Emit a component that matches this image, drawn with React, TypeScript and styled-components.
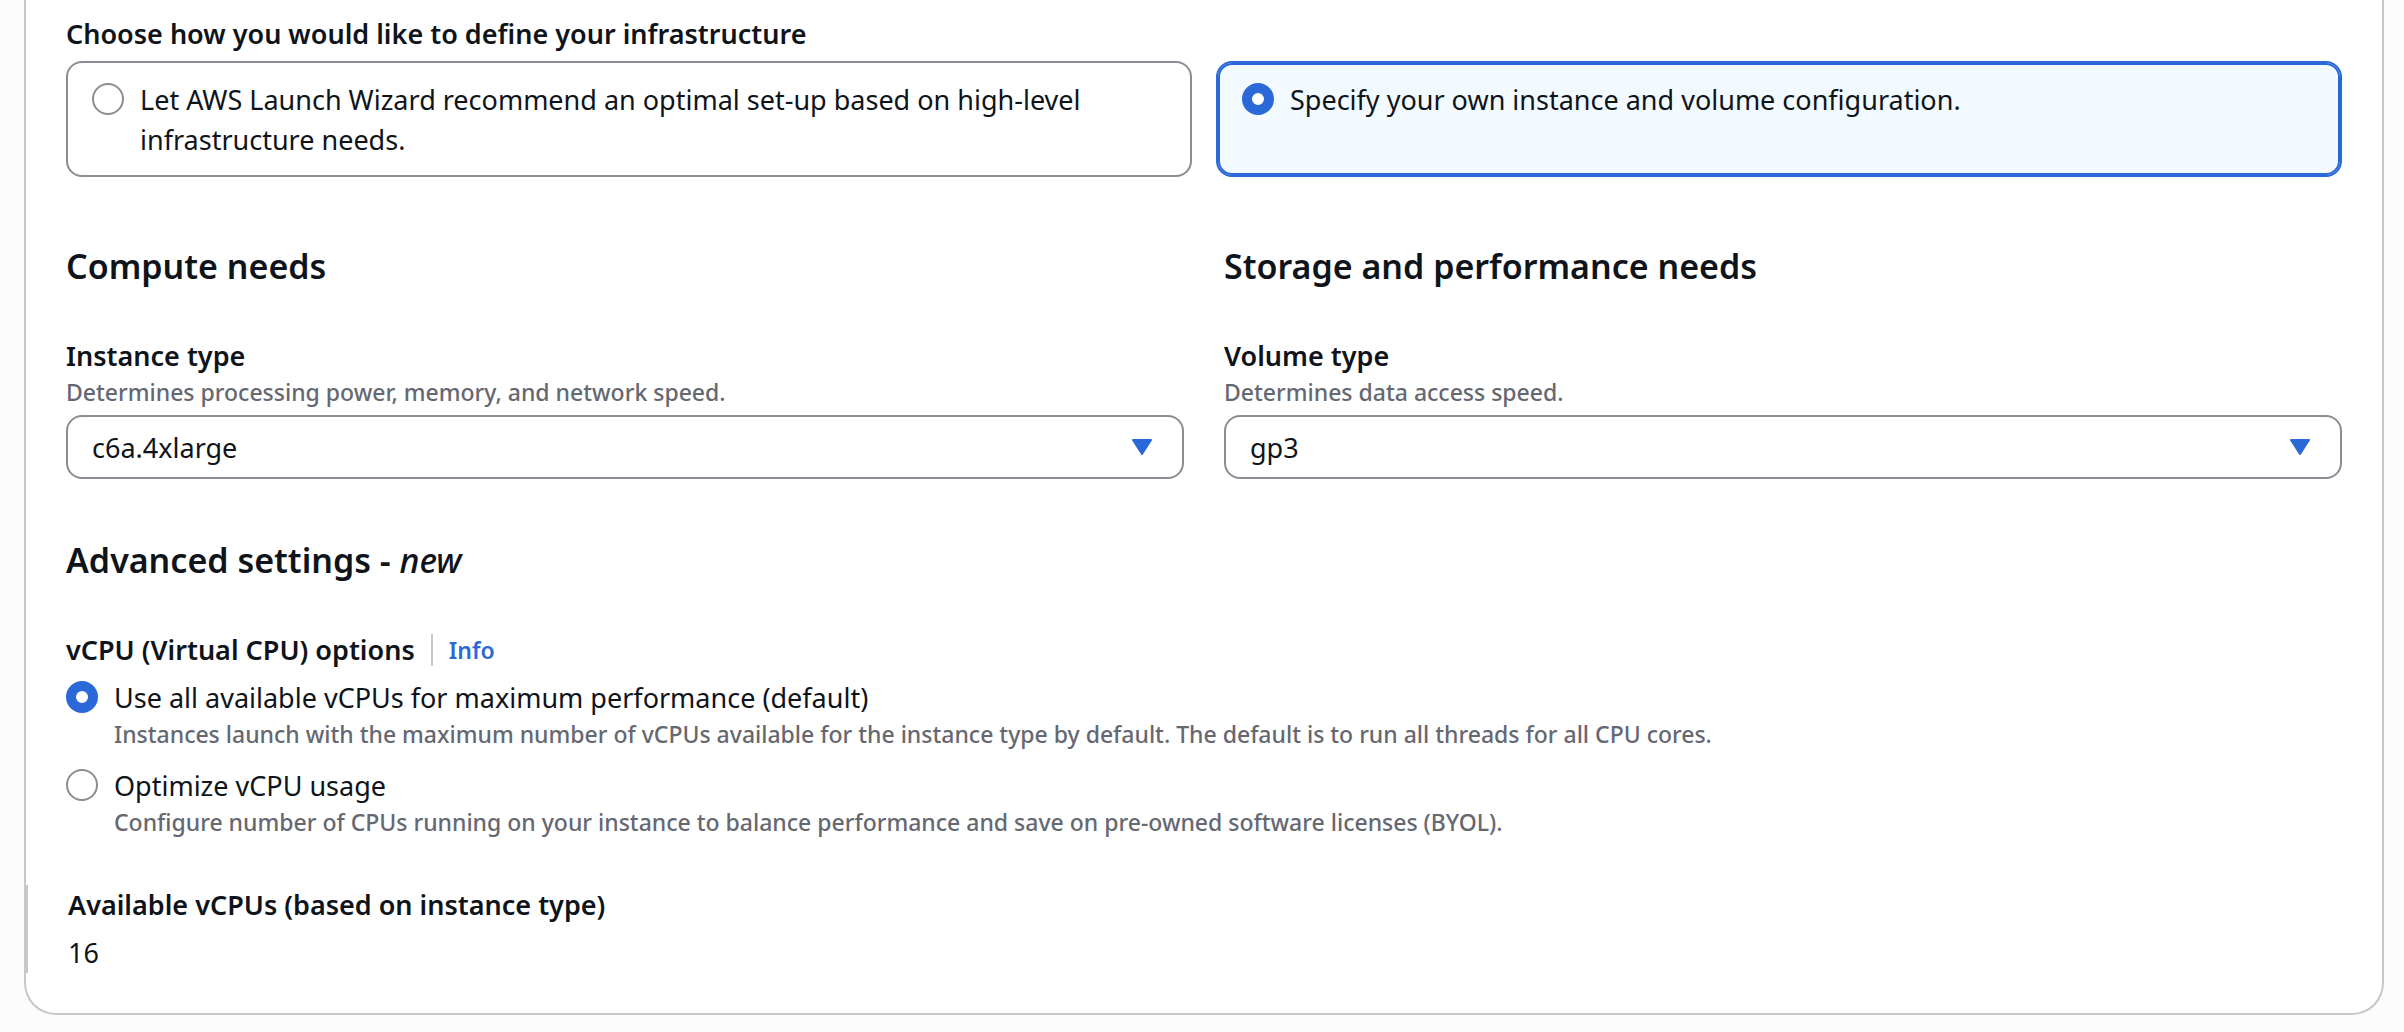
import React, { useId, useState } from 'react';
import styled, { createGlobalStyle, css } from 'styled-components';

const color = {
  page: '#fcfcfd',
  surface: '#ffffff',
  text: '#0f141a',
  muted: '#656871',
  control: '#8c8c94',
  divider: '#c6c6cd',
  accent: '#2b69d9',
  accentSurface: '#f2faff',
};

const GlobalStyle = createGlobalStyle`
  *, *::before, *::after { box-sizing: border-box; }
  body {
    margin: 0;
    background: ${color.page};
    color: ${color.text};
    font-family: "Noto Sans", "Open Sans", sans-serif;
    font-size: 27px;
    font-weight: 400;
    line-height: 40px;
  }
`;

const Page = styled.main`
  padding: 0 20px 16px 24px;
`;

const Card = styled.section`
  padding: 14px 40px 40px;
  background: ${color.surface};
  border: 2px solid ${color.divider};
  border-top: 0;
  border-radius: 0 0 32px 32px;
`;

const Group = styled.fieldset`
  margin: 0;
  padding: 0;
  border: 0;
  min-width: 0;
`;

const labelText = css`
  font-size: 27px;
  font-weight: 600;
  line-height: 40px;
`;

const Legend = styled.legend`
  ${labelText}
  padding: 0;
  margin-bottom: 7px;
`;

const LegendRow = styled.span`
  display: flex;
  align-items: center;
`;

const FieldLabel = styled.label`
  ${labelText}
  display: block;
`;

const Hint = styled.p`
  margin: 0;
  color: ${color.muted};
  font-size: 23px;
  font-weight: 500;
  line-height: 32px;
`;

const TileGrid = styled.div`
  display: grid;
  grid-template-columns: 1fr 1fr;
  gap: 24px;
`;

const Tile = styled.label<{ $selected: boolean }>`
  display: flex;
  gap: 16px;
  padding: 17px 24px 15px;
  border: 2px solid ${(p) => (p.$selected ? color.accent : color.control)};
  border-radius: 16px;
  background: ${(p) => (p.$selected ? color.accentSurface : color.surface)};
  box-shadow: ${(p) => (p.$selected ? `inset 0 0 0 2px ${color.accent}` : 'none')};
  cursor: pointer;
`;

const Radio = styled.input.attrs({ type: 'radio' })`
  appearance: none;
  flex: none;
  width: 32px;
  height: 32px;
  margin: 3px 0 0;
  border: 2px solid ${color.control};
  border-radius: 50%;
  background: ${color.surface};
  cursor: pointer;

  &:checked {
    border: 10px solid ${color.accent};
  }
`;

const Columns = styled.div`
  display: grid;
  grid-template-columns: 1fr 1fr;
  gap: 40px;
  margin-top: 65px;
`;

const Heading = styled.h2`
  margin: 0 0 46px;
  font-size: 34px;
  font-weight: 600;
  line-height: 48px;
`;

const NewTag = styled.em`
  font-weight: 500;
`;

const Advanced = styled.section`
  margin-top: 57px;
`;

const SelectBox = styled.div`
  position: relative;
  margin-top: 7px;
`;

const Select = styled.select`
  appearance: none;
  display: block;
  width: 100%;
  height: 64px;
  padding: 1px 72px 0 24px;
  border: 2px solid ${color.control};
  border-radius: 16px;
  background: ${color.surface};
  color: ${color.text};
  font: inherit;
  cursor: pointer;
`;

const Caret = styled.svg`
  position: absolute;
  top: 24px;
  right: 32px;
  width: 20px;
  height: 16px;
  fill: ${color.accent};
  stroke: ${color.accent};
  stroke-width: 2;
  stroke-linejoin: round;
  pointer-events: none;
`;

const InfoLink = styled.a`
  margin-left: 16px;
  color: ${color.accent};
  font-size: 23px;
  font-weight: 600;
  line-height: 40px;
  text-decoration: none;
`;

const Divider = styled.span`
  width: 2px;
  height: 32px;
  margin-left: 16px;
  background: ${color.divider};
`;

const OptionList = styled.div`
  display: grid;
  gap: 16px;
  padding-top: 1px;
`;

const Option = styled.div`
  display: flex;
  gap: 16px;
`;

const OptionLabel = styled.label`
  display: block;
  cursor: pointer;
`;

const Readout = styled.dl`
  display: grid;
  gap: 8px;
  margin: 47px 0 0 -40px;
  padding-left: 40px;
  border-left: 2px solid ${color.divider};
`;

const ReadoutTerm = styled.dt`
  ${labelText}
`;

const ReadoutValue = styled.dd`
  margin: 0;
`;

const setups = [
  {
    value: 'recommend',
    label: 'Let AWS Launch Wizard recommend an optimal set-up based on high-level infrastructure needs.',
  },
  { value: 'custom', label: 'Specify your own instance and volume configuration.' },
];

const vcpuOptions = [
  {
    value: 'all',
    label: 'Use all available vCPUs for maximum performance (default)',
    hint: 'Instances launch with the maximum number of vCPUs available for the instance type by default. The default is to run all threads for all CPU cores.',
  },
  {
    value: 'optimize',
    label: 'Optimize vCPU usage',
    hint: 'Configure number of CPUs running on your instance to balance performance and save on pre-owned software licenses (BYOL).',
  },
];

interface SelectFieldProps {
  label: string;
  hint: string;
  options: string[];
}

function SelectField({ label, hint, options }: SelectFieldProps) {
  const id = useId();
  return (
    <div>
      <FieldLabel htmlFor={id}>{label}</FieldLabel>
      <Hint id={`${id}-hint`}>{hint}</Hint>
      <SelectBox>
        <Select id={id} aria-describedby={`${id}-hint`}>
          {options.map((option) => (
            <option key={option}>{option}</option>
          ))}
        </Select>
        <Caret viewBox="0 0 20 16" aria-hidden="true">
          <path d="M1 1H19L10 15Z" />
        </Caret>
      </SelectBox>
    </div>
  );
}

export default function App() {
  const [setup, setSetup] = useState('custom');
  const [vcpu, setVcpu] = useState('all');

  return (
    <>
      <GlobalStyle />
      <Page>
        <Card>
          <Group>
            <Legend>Choose how you would like to define your infrastructure</Legend>
            <TileGrid>
              {setups.map(({ value, label }) => (
                <Tile key={value} $selected={setup === value}>
                  <Radio
                    name="setup"
                    value={value}
                    checked={setup === value}
                    onChange={() => setSetup(value)}
                  />
                  <span>{label}</span>
                </Tile>
              ))}
            </TileGrid>
          </Group>

          <Columns>
            <section>
              <Heading>Compute needs</Heading>
              <SelectField
                label="Instance type"
                hint="Determines processing power, memory, and network speed."
                options={['c6a.4xlarge']}
              />
            </section>
            <section>
              <Heading>Storage and performance needs</Heading>
              <SelectField
                label="Volume type"
                hint="Determines data access speed."
                options={['gp3']}
              />
            </section>
          </Columns>

          <Advanced>
            <Heading>
              Advanced settings - <NewTag>new</NewTag>
            </Heading>
            <Group>
              <Legend>
                <LegendRow>
                  vCPU (Virtual CPU) options
                  <Divider />
                  <InfoLink href="#info">Info</InfoLink>
                </LegendRow>
              </Legend>
              <OptionList>
                {vcpuOptions.map(({ value, label, hint }) => (
                  <Option key={value}>
                    <Radio
                      id={`vcpu-${value}`}
                      name="vcpu"
                      value={value}
                      checked={vcpu === value}
                      onChange={() => setVcpu(value)}
                      aria-describedby={`vcpu-${value}-hint`}
                    />
                    <div>
                      <OptionLabel htmlFor={`vcpu-${value}`}>{label}</OptionLabel>
                      <Hint id={`vcpu-${value}-hint`}>{hint}</Hint>
                    </div>
                  </Option>
                ))}
              </OptionList>
            </Group>
            <Readout>
              <ReadoutTerm>Available vCPUs (based on instance type)</ReadoutTerm>
              <ReadoutValue>16</ReadoutValue>
            </Readout>
          </Advanced>
        </Card>
      </Page>
    </>
  );
}
